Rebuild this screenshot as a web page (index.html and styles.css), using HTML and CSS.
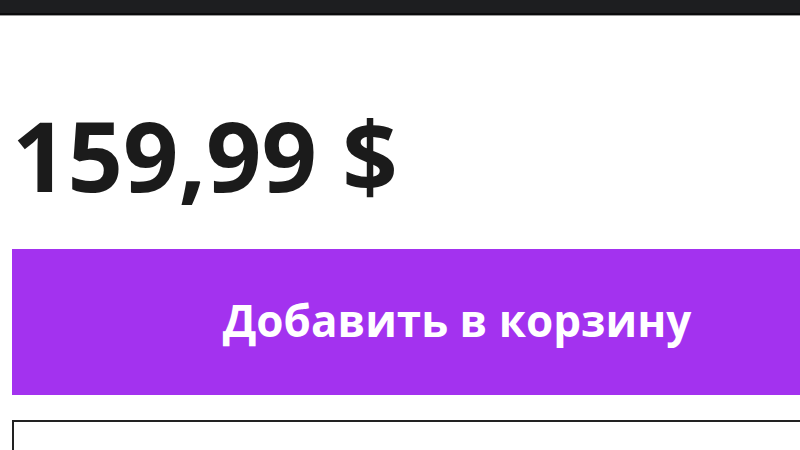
FILE: index.html
```html
<!DOCTYPE html>
<html lang="ru">
<head>
    <meta charset="UTF-8">
    <meta name="viewport" content="width=device-width, initial-scale=1.0">
    <title>Товар</title>
    <link rel="stylesheet" href="styles.css">
</head>
<body>
    <div class="page">
        <header class="topbar"></header>
        <main class="product">
            <div class="price">159,99 $</div>
            <button class="add-to-cart">Добавить в корзину</button>
            <div class="options"></div>
        </main>
    </div>
</body>
</html>
```

FILE: styles.css
```css
body {
    margin: 0;
    padding: 0;
    font-family: "Open Sans", "Noto Sans", sans-serif;
    background: #fff;
}

.page {
    width: 800px;
    height: 450px;
    overflow: hidden;
}

.topbar {
    height: 13px;
    background: #1d1e20;
    border-bottom: 2px solid #0b0b0c;
    box-shadow: 0 1px 0 #9a9a9a;
}

.product {
    width: 890px;
    padding-left: 12px;
}

.price {
    margin-top: 91px;
    font-size: 97px;
    font-weight: 700;
    line-height: 1;
    color: #1b1b1b;
}

.add-to-cart {
    display: block;
    width: 100%;
    height: 146px;
    margin-top: 46px;
    padding: 0 0 4px;
    border: none;
    background: #a332ef;
    color: #fff;
    font-family: inherit;
    font-size: 44px;
    font-weight: 700;
    text-align: center;
    cursor: pointer;
}

.options {
    margin-top: 25px;
    height: 120px;
    border: 2px solid #222;
}
```
